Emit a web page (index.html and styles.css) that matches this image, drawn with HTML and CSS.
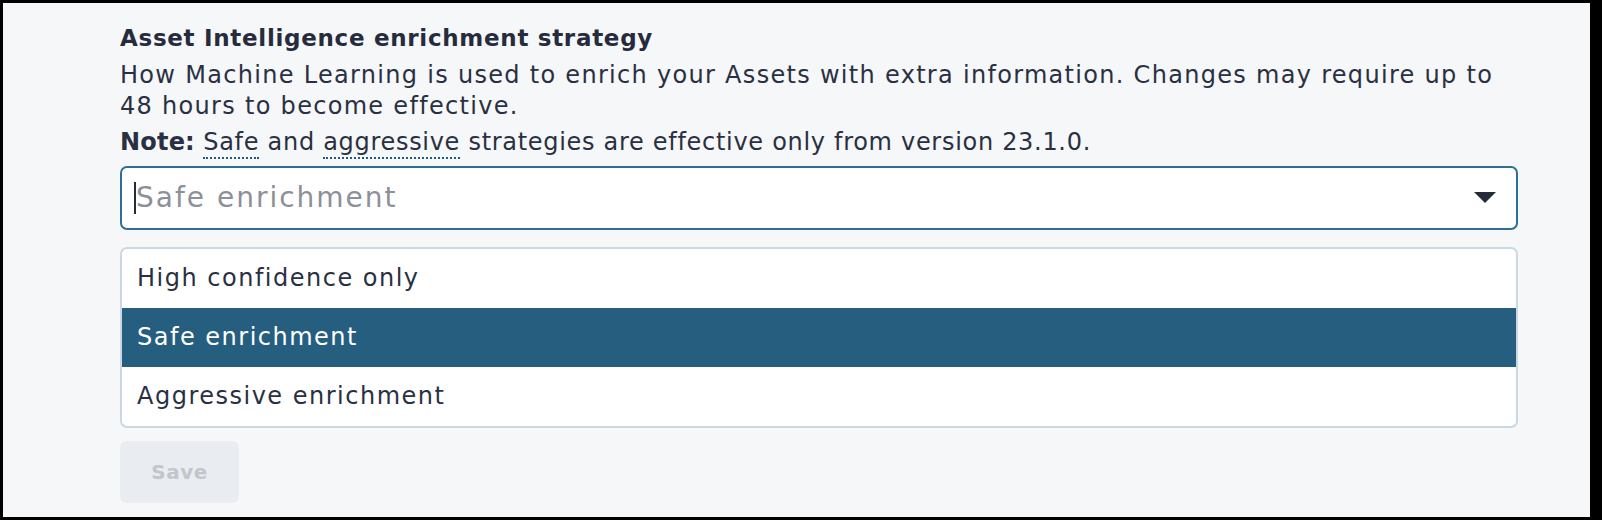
FILE: index.html
```html
<!DOCTYPE html>
<html lang="en">
<head>
<meta charset="utf-8">
<title>Asset Intelligence enrichment strategy</title>
<link rel="stylesheet" href="styles.css">
</head>
<body>
<div class="panel">
  <div class="field">
    <h3 class="title">Asset Intelligence enrichment strategy</h3>
    <p class="desc">How Machine Learning is used to enrich your Assets with extra information. Changes may require up to 48 hours to become effective.</p>
    <p class="note"><strong>Note:</strong> <span class="term">Safe</span> and <span class="term">aggressive</span> strategies are effective only from version 23.1.0.</p>
    <div class="select">
      <span class="cursor"></span>
      <span class="placeholder">Safe enrichment</span>
      <span class="caret"></span>
    </div>
    <ul class="menu">
      <li class="option">High confidence only</li>
      <li class="option selected">Safe enrichment</li>
      <li class="option">Aggressive enrichment</li>
    </ul>
    <button class="save" disabled>Save</button>
  </div>
</div>
</body>
</html>
```

FILE: styles.css
```css
html, body {
  margin: 0;
  padding: 0;
  background: #000;
  height: 520px;
  overflow: hidden;
}

body {
  padding: 3px 12px 3px 3px;
  box-sizing: border-box;
  font-family: "DejaVu Sans", "Inter", sans-serif;
  color: #2a3043;
}

.panel {
  background: #f6f7f9;
  height: 514px;
  box-sizing: border-box;
  padding: 20px 72px 0 117px;
}

.field {
  display: flex;
  flex-direction: column;
}

.title {
  margin: 0;
  font-size: 23px;
  font-weight: 700;
  line-height: 30px;
  letter-spacing: 0.7px;
  color: #262c3d;
}

.desc {
  margin: 7px 0 0;
  font-size: 24px;
  line-height: 30.5px;
  letter-spacing: 1.3px;
}

.note {
  margin: 6px 0 0;
  font-size: 24px;
  line-height: 30.5px;
  letter-spacing: 0.7px;
}

.note strong {
  font-weight: 700;
  letter-spacing: 0.2px;
}

.term {
  border-bottom: 2px dotted #1f5a80;
  padding-bottom: 1px;
}

.select {
  margin-top: 8px;
  height: 64px;
  box-sizing: border-box;
  border: 2px solid #2f6f97;
  border-radius: 7px;
  background: #fff;
  display: flex;
  align-items: center;
  padding: 0 20px 0 12px;
}

.cursor {
  width: 2px;
  height: 32px;
  background: #262b3a;
}

.placeholder {
  flex: 1;
  font-size: 28px;
  letter-spacing: 2px;
  color: #8b9099;
  margin-left: 0;
}

.caret {
  width: 0;
  height: 0;
  border-left: 11px solid transparent;
  border-right: 11px solid transparent;
  border-top: 11px solid #262b3a;
}

.menu {
  list-style: none;
  margin: 17px 0 0;
  padding: 0;
  border: 2px solid #cbd8e2;
  border-radius: 7px;
  background: #fff;
  overflow: hidden;
}

.option {
  height: 59px;
  display: flex;
  align-items: center;
  padding-left: 15px;
  font-size: 24px;
  letter-spacing: 1.5px;
  color: #2a3043;
}

.option.selected {
  background: #265e7f;
  color: #fff;
}

.save {
  align-self: flex-start;
  margin-top: 13px;
  width: 119px;
  height: 62px;
  border: 0;
  border-radius: 7px;
  background: #e9edf1;
  color: #c2c6cc;
  font-family: inherit;
  font-size: 20px;
  font-weight: 700;
  letter-spacing: 0.5px;
}
```
